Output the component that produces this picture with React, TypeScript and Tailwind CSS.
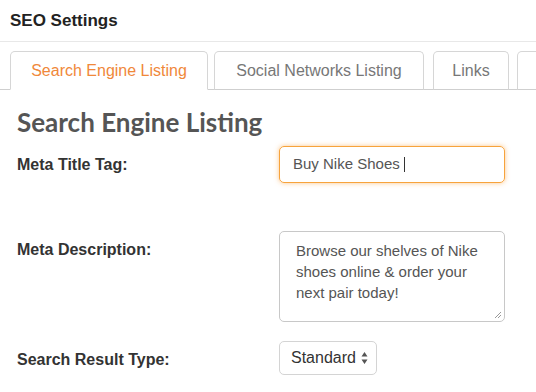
import { useState } from 'react';

const tabs = [
  { label: 'Search Engine Listing', width: 'w-[198px]', gap: 'mr-[6px]' },
  { label: 'Social Networks Listing', width: 'w-[210px]', gap: 'mr-[9px]' },
  { label: 'Links', width: 'w-[76px]', gap: 'mr-[8px]' },
  { label: '', width: 'w-[120px]', gap: '' },
];

export default function App() {
  const [active] = useState(0);

  return (
    <div className="w-[536px] h-[392px] overflow-hidden bg-white font-['Liberation_Sans',Arial,sans-serif]">
      {/* header */}
      <div className="h-[42px] flex items-center px-[10px] border-b border-[#e8e8e8]">
        <h2 className="text-[17px] font-bold text-[#222]">SEO Settings</h2>
      </div>

      {/* tabs */}
      <div className="pt-[9px] pl-[10px] flex items-end border-b border-[#cfcfcf] whitespace-nowrap">
        {tabs.map((t, i) => (
          <div
            key={i}
            className={`${t.width} ${t.gap} shrink-0 h-[39px] -mb-px flex items-center justify-center rounded-t-[5px] border border-[#d6d6d6] text-[16px] ${
              i === active
                ? 'bg-white border-b-white text-[#f0883a]'
                : 'border-b-[#cfcfcf] text-[#777]'
            }`}
          >
            {t.label}
          </div>
        ))}
      </div>

      <div className="px-[17px]">
        <h1 className="mt-[16px] text-[26px] leading-[32px] font-bold text-[#555] font-['Lato',sans-serif]">
          Search Engine Listing
        </h1>

        <div className="mt-[8px] grid grid-cols-[262px_226px] text-[15px]">
          <div className="pt-[9px] font-bold text-[16px] leading-[20px] text-[#333]">Meta Title Tag:</div>
          <div className="h-[37px] rounded-[5px] border border-[#f7a33c] shadow-[0_0_5px_rgba(247,150,40,0.55)] flex items-center px-[13px] text-[#555]">
            Buy Nike Shoes
            <span className="ml-[4px] w-px h-[15px] bg-[#333]" />
          </div>

          <div className="mt-[48px] pt-[9px] font-bold text-[16px] leading-[20px] text-[#333]">Meta Description:</div>
          <div className="mt-[48px] relative h-[91px] rounded-[5px] border border-[#c8c8c8] pl-[16px] pr-[14px] pt-[8px] leading-[21px] text-[#555]">
            Browse our shelves of Nike shoes online &amp; order your next pair today!
            <svg className="absolute right-[2px] bottom-[2px]" width="8" height="8" viewBox="0 0 8 8">
              <path d="M7 1 L1 7 M7 4 L4 7" stroke="#999" strokeWidth="1" />
            </svg>
          </div>

          <div className="mt-[19px] pt-[9px] font-bold text-[16px] leading-[20px] text-[#333]">Search Result Type:</div>
          <div className="mt-[19px]">
            <div className="w-[98px] h-[34px] rounded-[5px] border border-[#d4d4d4] flex items-center pl-[11px] text-[16px] text-[#333]">
              Standard
              <svg className="ml-[5px]" width="7" height="14" viewBox="0 0 7 14">
                <path d="M3.5 1 L6.5 5.5 H0.5 Z M3.5 13 L6.5 8.5 H0.5 Z" fill="#555" />
              </svg>
            </div>
          </div>
        </div>
      </div>
    </div>
  );
}
